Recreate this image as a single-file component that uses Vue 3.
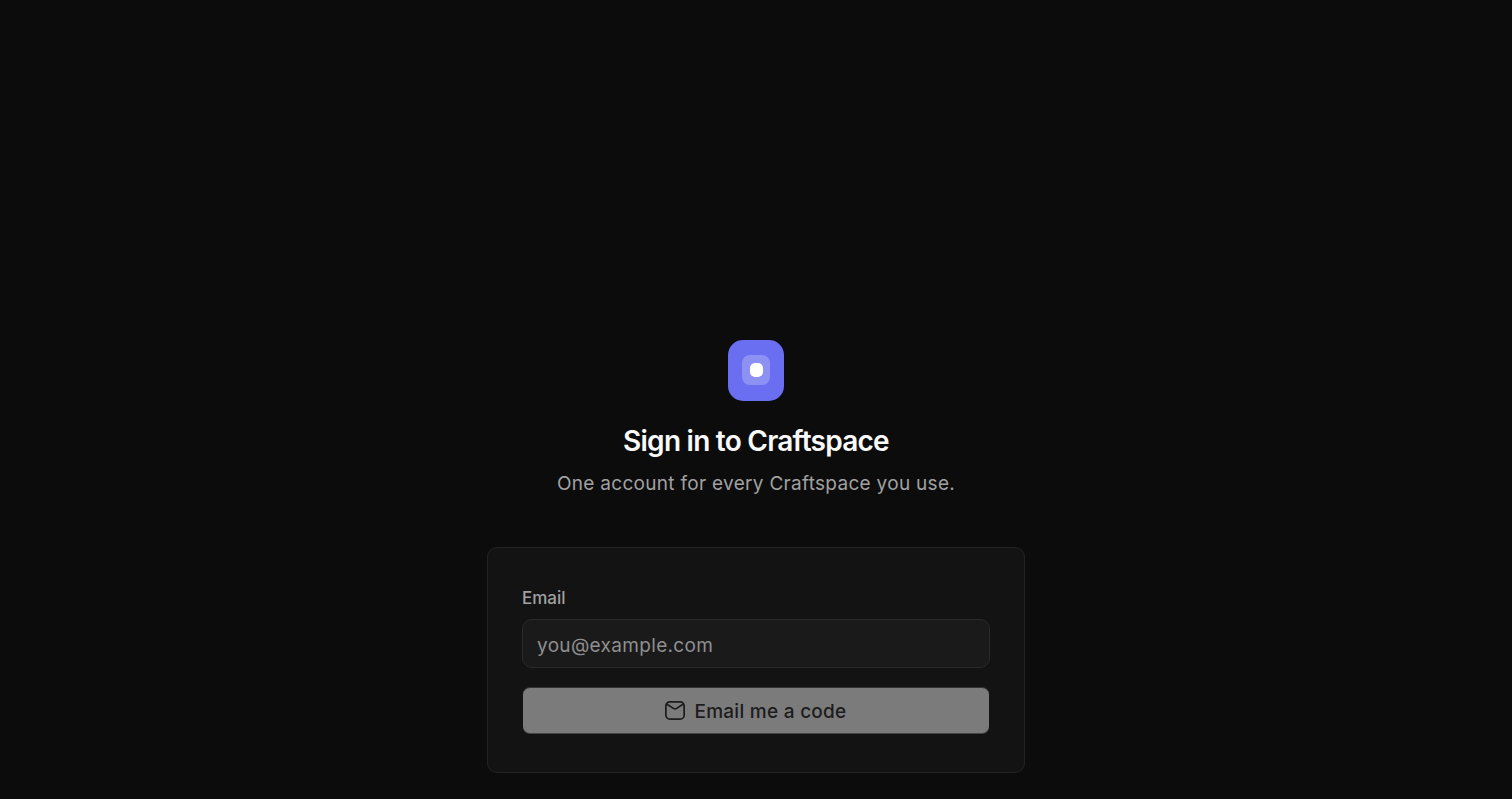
<script setup>
const placeholder = 'you@example.com'
</script>

<template>
  <main class="page">
    <div class="logo"><div class="logo-inner"><div class="logo-dot"></div></div></div>
    <h1 class="title">Sign in to Craftspace</h1>
    <p class="subtitle">One account for every Craftspace you use.</p>
    <form class="card" @submit.prevent>
      <label class="label" for="email">Email</label>
      <input id="email" class="input" type="email" :placeholder="placeholder" />
      <button class="button" type="submit">
        <svg class="icon" viewBox="0 0 20 19" fill="none" stroke="currentColor" stroke-width="1.7" stroke-linecap="round" stroke-linejoin="round">
          <rect x="0.85" y="0.85" width="18.3" height="17.3" rx="4" />
          <path d="M2 3.2l6.4 4.2a3 3 0 0 0 3.2 0L18 3.2" />
        </svg>
        <span class="button-label">Email me a code</span>
      </button>
    </form>
  </main>
</template>

<style scoped>
.page {
  box-sizing: border-box;
  height: 799px;
  overflow: hidden;
  background: #0c0c0d;
  padding-top: 340px;
  display: flex;
  flex-direction: column;
  align-items: center;
  font-family: Inter, "Liberation Sans", sans-serif;
}
.logo {
  box-sizing: border-box;
  width: 56px;
  height: 61px;
  padding-bottom: 1px;
  border-radius: 15px;
  background: #6a6ef0;
  display: flex;
  align-items: center;
  justify-content: center;
}
.logo-inner {
  width: 28px;
  height: 30px;
  border-radius: 8px;
  background: #8e91f4;
  display: flex;
  align-items: center;
  justify-content: center;
}
.logo-dot {
  width: 13px;
  height: 14px;
  border-radius: 5px;
  background: #fff;
}
.title {
  margin: 22px 0 0;
  font-size: 28px;
  line-height: 36px;
  font-weight: 600;
  letter-spacing: -0.75px;
  color: #fafafa;
}
.subtitle {
  margin: 11px 0 0;
  font-size: 19px;
  line-height: 28px;
  font-weight: 400;
  letter-spacing: 0.3px;
  color: #a1a1a1;
}
.card {
  box-sizing: border-box;
  width: 538px;
  height: 226px;
  margin-top: 49px;
  padding: 38px 34px 0;
  background: #131314;
  border: 1px solid #242425;
  border-radius: 10px;
  display: flex;
  flex-direction: column;
}
.label {
  font-size: 17px;
  line-height: 24px;
  font-weight: 500;
  color: #a1a1a1;
}
.input {
  box-sizing: border-box;
  width: 100%;
  height: 49px;
  margin-top: 9px;
  padding: 3px 14px 0;
  background: #1a1a1b;
  border: 1px solid #2a2a2b;
  border-radius: 10px;
  color: #fafafa;
  font: 400 19px Inter, "Liberation Sans", sans-serif;
  letter-spacing: 0.33px;
  outline: none;
}
.input::placeholder {
  color: #8f8f8f;
  opacity: 1;
}
.button {
  box-sizing: border-box;
  width: 466px;
  height: 47px;
  margin: 19px 0 0;
  align-self: center;
  background: #7b7b7b;
  border: none;
  border-top: 1px solid #333;
  border-bottom: 1px solid #444;
  border-radius: 7px;
  color: #1c1c1d;
  font: 500 19px Inter, "Liberation Sans", sans-serif;
  letter-spacing: 0.27px;
  display: flex;
  align-items: center;
  justify-content: center;
  gap: 9px;
  padding: 0;
}
.button-label {
  padding-top: 2px;
}
.icon {
  width: 20px;
  height: 19px;
  flex: none;
}
</style>
